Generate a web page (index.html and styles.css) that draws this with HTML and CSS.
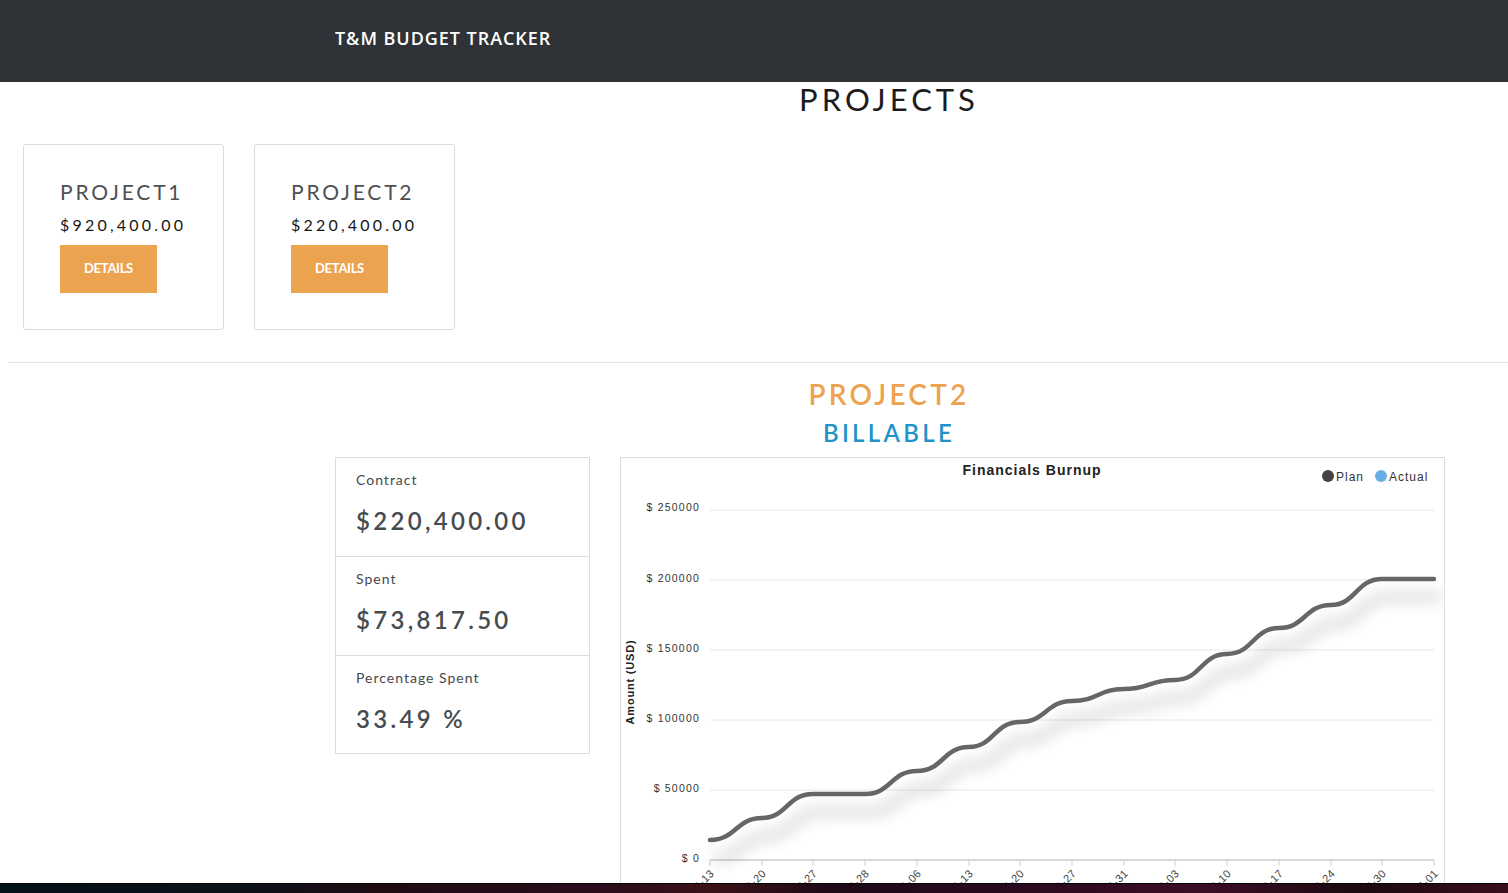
FILE: index.html
```html
<!DOCTYPE html>
<html lang="en">
<head>
<meta charset="utf-8">
<title>T&amp;M Budget Tracker</title>
<link rel="stylesheet" href="styles.css">
</head>
<body>
<nav class="navbar">
  <span class="brand">T&amp;M BUDGET TRACKER</span>
</nav>
<main class="main">
  <h1 class="page-title">PROJECTS</h1>
  <section class="cards">
    <div class="card">
      <h2 class="card-title">PROJECT1</h2>
      <div class="card-amount">$920,400.00</div>
      <button class="btn-details">DETAILS</button>
    </div>
    <div class="card">
      <h2 class="card-title">PROJECT2</h2>
      <div class="card-amount">$220,400.00</div>
      <button class="btn-details">DETAILS</button>
    </div>
  </section>
  <hr class="divider">
  <h2 class="project-name">PROJECT2</h2>
  <h3 class="project-type">BILLABLE</h3>
  <section class="detail">
    <div class="stats">
      <div class="stat">
        <div class="stat-label">Contract</div>
        <div class="stat-value">$220,400.00</div>
      </div>
      <div class="stat">
        <div class="stat-label">Spent</div>
        <div class="stat-value">$73,817.50</div>
      </div>
      <div class="stat">
        <div class="stat-label">Percentage Spent</div>
        <div class="stat-value">33.49 %</div>
      </div>
    </div>
    <div class="chart">
      <svg class="chart-svg" width="823" height="450" viewBox="0 0 823 450">
        <defs>
          <filter id="lineShadow" x="-10%" y="-20%" width="120%" height="170%">
            <feGaussianBlur in="SourceAlpha" stdDeviation="8" result="blur"/>
            <feOffset in="blur" dx="6" dy="18" result="off"/>
            <feComponentTransfer in="off" result="soft">
              <feFuncA type="linear" slope="0.32"/>
            </feComponentTransfer>
            <feMerge>
              <feMergeNode in="soft"/>
              <feMergeNode in="SourceGraphic"/>
            </feMerge>
          </filter>
        </defs>
        <text class="chart-title" x="411" y="17" text-anchor="middle">Financials Burnup</text>
        <circle cx="707" cy="18" r="6" fill="#444"/>
        <text class="legend" x="715" y="23">Plan</text>
        <circle cx="760" cy="18" r="6" fill="#6aafe3"/>
        <text class="legend" x="768" y="23">Actual</text>
        <text class="axis-title" transform="translate(13,224) rotate(-90)" text-anchor="middle">Amount (USD)</text>
        <g class="grid">
          <line x1="89" y1="52" x2="813" y2="52"/>
          <line x1="89" y1="122" x2="813" y2="122"/>
          <line x1="89" y1="192" x2="813" y2="192"/>
          <line x1="89" y1="262" x2="813" y2="262"/>
          <line x1="89" y1="332" x2="813" y2="332"/>
        </g>
        <line class="x-axis" x1="89" y1="402" x2="813" y2="402"/>
        <g class="y-labels" text-anchor="end">
          <text x="79" y="53">$ 250000</text>
          <text x="79" y="124">$ 200000</text>
          <text x="79" y="194">$ 150000</text>
          <text x="79" y="264">$ 100000</text>
          <text x="79" y="334">$ 50000</text>
          <text x="79" y="404">$ 0</text>
        </g>
        <g class="ticks">
          <line x1="89" y1="402" x2="89" y2="408"/>
          <line x1="141" y1="402" x2="141" y2="408"/>
          <line x1="192" y1="402" x2="192" y2="408"/>
          <line x1="244" y1="402" x2="244" y2="408"/>
          <line x1="296" y1="402" x2="296" y2="408"/>
          <line x1="348" y1="402" x2="348" y2="408"/>
          <line x1="399" y1="402" x2="399" y2="408"/>
          <line x1="451" y1="402" x2="451" y2="408"/>
          <line x1="503" y1="402" x2="503" y2="408"/>
          <line x1="554" y1="402" x2="554" y2="408"/>
          <line x1="606" y1="402" x2="606" y2="408"/>
          <line x1="658" y1="402" x2="658" y2="408"/>
          <line x1="710" y1="402" x2="710" y2="408"/>
          <line x1="761" y1="402" x2="761" y2="408"/>
          <line x1="813" y1="402" x2="813" y2="408"/>
        </g>
        <g class="x-labels" text-anchor="end">
          <text transform="translate(94,416) rotate(-45)">2019-02-13</text>
          <text transform="translate(146,416) rotate(-45)">2019-02-20</text>
          <text transform="translate(197,416) rotate(-45)">2019-02-27</text>
          <text transform="translate(249,416) rotate(-45)">2019-03-28</text>
          <text transform="translate(301,416) rotate(-45)">2019-04-06</text>
          <text transform="translate(353,416) rotate(-45)">2019-04-13</text>
          <text transform="translate(404,416) rotate(-45)">2019-04-20</text>
          <text transform="translate(456,416) rotate(-45)">2019-04-27</text>
          <text transform="translate(508,416) rotate(-45)">2019-05-31</text>
          <text transform="translate(559,416) rotate(-45)">2019-06-03</text>
          <text transform="translate(611,416) rotate(-45)">2019-06-10</text>
          <text transform="translate(663,416) rotate(-45)">2019-06-17</text>
          <text transform="translate(715,416) rotate(-45)">2019-06-24</text>
          <text transform="translate(766,416) rotate(-45)">2019-06-30</text>
          <text transform="translate(818,416) rotate(-45)">2019-07-01</text>
        </g>
        <path class="plan-line" filter="url(#lineShadow)" d="M89,382 C115,382 115,360 141,360 C166,360 166,336 192,336 C218,336 218,336 244,336 C270,336 270,313 296,313 C322,313 322,289 348,289 C373,289 373,264 399,264 C425,264 425,243 451,243 C477,243 477,231 503,231 C528,231 528,222 554,222 C580,222 580,196 606,196 C632,196 632,170 658,170 C684,170 684,147 710,147 C735,147 735,121 761,121 C787,121 787,121 813,121"/>
      </svg>
    </div>
  </section>
</main>
<div class="desktop-strip"></div>
</body>
</html>
```

FILE: styles.css
```css
* {
  box-sizing: border-box;
}

html, body {
  margin: 0;
  padding: 0;
  background: #ffffff;
  font-family: "Lato", "Noto Sans", sans-serif;
  overflow: hidden;
}

.navbar {
  height: 82px;
  background: #2f3337;
  display: flex;
  align-items: center;
  padding-left: 335px;
}

.brand {
  color: #ffffff;
  font-family: "Open Sans", "Noto Sans", sans-serif;
  font-weight: 600;
  font-size: 18px;
  letter-spacing: 0.95px;
  margin-top: -7px;
}

.main {
  padding-left: 8px;
}

.page-title {
  margin: 0 0 0 262px;
  text-align: center;
  font-family: "Lato", sans-serif;
  font-weight: 400;
  font-size: 31px;
  line-height: 34px;
  letter-spacing: 4px;
  color: #1c1c1c;
}

.cards {
  display: flex;
  gap: 30px;
  padding-left: 15px;
  margin-top: 28px;
}

.card {
  width: 201px;
  height: 186px;
  border: 1px solid #dcdcdc;
  border-radius: 3px;
  padding: 35px 36px;
}

.card-title {
  margin: 0;
  font-family: "Lato", sans-serif;
  font-weight: 400;
  font-size: 21px;
  line-height: 24px;
  letter-spacing: 2.8px;
  color: #4d5155;
}

.card-amount {
  margin-top: 10px;
  font-family: "Lato", sans-serif;
  font-size: 16px;
  line-height: 22px;
  letter-spacing: 3.2px;
  color: #151515;
}

.btn-details {
  display: block;
  margin-top: 9px;
  width: 97px;
  height: 48px;
  border: none;
  border-radius: 0;
  background: #eca34f;
  color: #ffffff;
  font-family: "Lato", sans-serif;
  font-weight: 700;
  font-size: 13px;
  letter-spacing: -0.3px;
  padding: 0 0 3px 0;
}

.divider {
  margin: 32px 0 0 0;
  border: none;
  border-top: 1px solid #e3e3e3;
  height: 0;
}

.project-name {
  margin: 14px 0 0 262px;
  text-align: center;
  font-family: "Lato", sans-serif;
  font-weight: 600;
  font-size: 28px;
  line-height: 34px;
  letter-spacing: 3.2px;
  color: #eda34e;
}

.project-type {
  margin: 7px 0 0 262px;
  text-align: center;
  font-family: "Lato", sans-serif;
  font-weight: 600;
  font-size: 24px;
  line-height: 30px;
  letter-spacing: 3.3px;
  color: #2293c8;
}

.detail {
  display: flex;
  align-items: flex-start;
  gap: 30px;
  padding-left: 327px;
  margin-top: 9px;
}

.stats {
  width: 255px;
  border: 1px solid #dcdcdc;
}

.stat {
  padding: 13px 20px 20px 20px;
  height: 99px;
  border-bottom: 1px solid #dcdcdc;
}

.stat:last-child {
  border-bottom: none;
  height: 97px;
}

.stat-label {
  font-family: "Lato", sans-serif;
  font-size: 14px;
  line-height: 18px;
  letter-spacing: 1px;
  color: #45494d;
}

.stat-value {
  margin-top: 17px;
  font-family: "Lato", sans-serif;
  font-weight: 600;
  font-size: 24px;
  line-height: 30px;
  letter-spacing: 3.3px;
  color: #464b50;
}

.chart {
  width: 825px;
  height: 452px;
  border: 1px solid #dcdcdc;
}

.chart-svg {
  display: block;
  font-family: "Liberation Sans", Arial, sans-serif;
}

.chart-title {
  font-weight: 700;
  font-size: 14px;
  letter-spacing: 1px;
  fill: #222;
}

.legend {
  font-size: 12px;
  letter-spacing: 1px;
  fill: #333;
}

.axis-title {
  font-weight: 700;
  font-size: 11px;
  letter-spacing: 0.8px;
  fill: #222;
}

.grid line {
  stroke: #e6e6e6;
  stroke-width: 1;
}

.x-axis {
  stroke: #d8d8d8;
  stroke-width: 2;
}

.ticks line {
  stroke: #d0d0d0;
  stroke-width: 1;
}

.y-labels text {
  font-size: 10.5px;
  letter-spacing: 1.2px;
  fill: #333;
}

.x-labels text {
  font-size: 11px;
  letter-spacing: 0.5px;
  fill: #444;
}

.plan-line {
  fill: none;
  stroke: #666666;
  stroke-width: 4.5;
  stroke-linecap: round;
}

.desktop-strip {
  position: fixed;
  left: 0;
  right: 0;
  bottom: 0;
  height: 10px;
  background: linear-gradient(90deg, #03111a 0%, #0a1118 15%, #1d0c14 25%, #2a0c1c 40%, #3a1117 47%, #1f0a17 55%, #26091d 65%, #3d0d26 80%, #1a0a10 90%, #3a0d1b 100%);
  border-top: 1px solid #000;
}
```
